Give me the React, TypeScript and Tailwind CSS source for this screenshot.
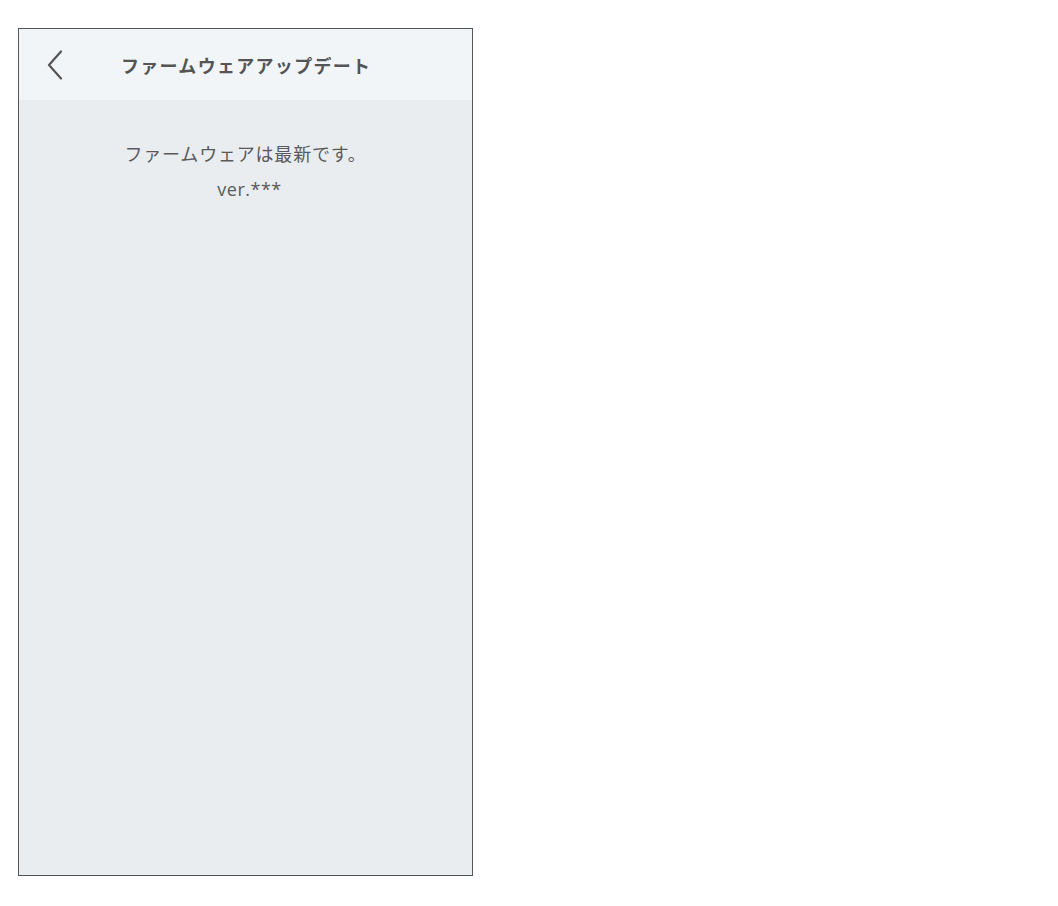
export default function App() {
  return (
    <div className="min-h-screen bg-white pl-[18px] pt-[28px]" style={{ fontFamily: '"Noto Sans CJK JP", "Noto Sans", sans-serif' }}>
      <div className="flex h-[848px] w-[455px] flex-col border border-[#555555] bg-[#e9edf0]">
        {/* Header */}
        <div className="flex h-[71px] shrink-0 items-center bg-[#f2f5f8]">
          <button className="ml-[28px] flex h-[30px] w-[16px] items-center text-[#555555]">
            <svg width="16" height="30" viewBox="0 0 16 30" fill="none">
              <path d="M14 1.5 L2 15 L14 28.5" stroke="currentColor" strokeWidth="2.2" strokeLinecap="round" strokeLinejoin="round" />
            </svg>
          </button>
          <span className="ml-[58px] text-[18px] leading-[24px] font-bold tracking-[1.3px] text-[#555555]">
            ファームウェアアップデート
          </span>
        </div>

        {/* Body */}
        <div className="flex flex-col items-center pt-[40px] text-[#5a5a5a]">
          <p className="text-[18px] leading-[26px] tracking-[0.8px]">ファームウェアは最新です。</p>
          <p className="ml-[8px] mt-[10px] text-[18px] leading-[26px] tracking-[0.5px]" style={{ fontFamily: '"Open Sans", "Noto Sans", sans-serif' }}>ver.***</p>
        </div>
      </div>
    </div>
  );
}
